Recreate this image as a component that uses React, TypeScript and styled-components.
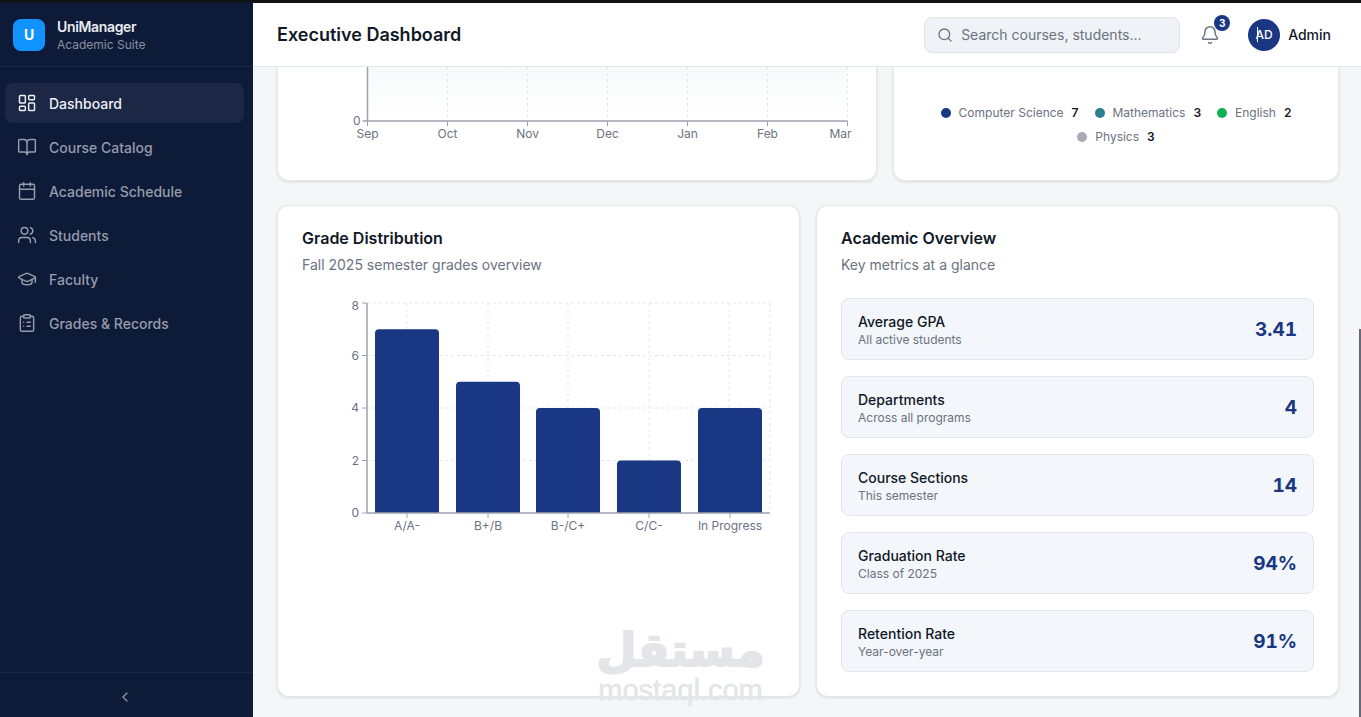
import React from "react";
import styled, { createGlobalStyle } from "styled-components";
import { LayoutDashboard, BookOpen, Calendar, Users, GraduationCap, ClipboardList, ChevronLeft, Search, Bell } from "lucide-react";

const Global = createGlobalStyle`
  html, body { margin: 0; padding: 0; height: 100%; overflow: hidden; }
  body { font-family: Inter, "Liberation Sans", sans-serif; background: #f5f6f8; }
  * { box-sizing: border-box; }
`;

const Shell = styled.div`
  position: relative;
  width: 1361px;
  height: 717px;
  overflow: hidden;
  display: flex;
  flex-direction: column;
`;
const TopEdge = styled.div`
  height: 3px;
  flex: none;
  background: #121316;
`;
const Frame = styled.div`
  flex: 1;
  min-height: 0;
  display: flex;
`;
const Sidebar = styled.aside`
  width: 253px;
  flex: none;
  background: #0d1a38;
  display: flex;
  flex-direction: column;
`;
const Brand = styled.div`
  height: 64px;
  flex: none;
  display: flex;
  align-items: center;
  gap: 12px;
  padding: 0 13px;
  border-bottom: 1px solid #1b2745;
`;
const LogoMark = styled.div`
  width: 32px;
  height: 32px;
  border-radius: 8px;
  background: #1093fe;
  color: #fff;
  font-size: 14px;
  font-weight: 700;
  display: flex;
  align-items: center;
  justify-content: center;
`;
const BrandText = styled.div`
  display: flex;
  flex-direction: column;
`;
const BrandName = styled.span`
  font-size: 14px;
  line-height: 20px;
  font-weight: 600;
  letter-spacing: -0.35px;
  color: #e9ebee;
`;
const BrandSub = styled.span`
  font-size: 12px;
  line-height: 16px;
  color: #8a90a0;
`;
const Nav = styled.nav`
  flex: 1;
  padding: 16px 9px 0 5px;
  display: flex;
  flex-direction: column;
  gap: 4px;
`;
const NavItem = styled.div<{ $active?: boolean }>`
  height: 40px;
  display: flex;
  align-items: center;
  gap: 12px;
  padding: 0 12px;
  border-radius: 8px;
  font-size: 14px;
  font-weight: 500;
  color: ${(p) => (p.$active ? "#eef0f3" : "#979cab")};
  background: ${(p) => (p.$active ? "#1b2745" : "transparent")};
`;
const SideFoot = styled.div`
  height: 45px;
  flex: none;
  border-top: 1px solid #1b2745;
  color: #8a90a0;
  padding: 4px 3px 0 0;
  display: flex;
  align-items: center;
  justify-content: center;
`;
const Main = styled.main`
  flex: 1;
  min-width: 0;
  display: flex;
  flex-direction: column;
`;
const Header = styled.header`
  height: 64px;
  flex: none;
  background: #fff;
  border-bottom: 1px solid #e1e6ec;
  display: flex;
  align-items: center;
  padding: 0 30px 0 24px;
`;
const PageTitle = styled.h1`
  margin: 0;
  flex: 1;
  font-size: 18px;
  font-weight: 600;
  color: #111827;
`;
const SearchBox = styled.div`
  width: 256px;
  height: 36px;
  display: flex;
  align-items: center;
  gap: 8px;
  padding: 0 12px;
  background: #eff2f6;
  border: 1px solid #e0e4ea;
  border-radius: 8px;
  color: #6b7280;
  font-size: 14px;
`;
const BellWrap = styled.div`
  position: relative;
  margin-left: 20px;
  width: 20px;
  height: 20px;
  color: #6b7280;
`;
const Badge = styled.span`
  position: absolute;
  top: -10px;
  left: 14px;
  width: 16px;
  height: 16px;
  border-radius: 50%;
  background: #1a3783;
  color: #fff;
  font-size: 10px;
  font-weight: 700;
  display: flex;
  align-items: center;
  justify-content: center;
`;
const Avatar = styled.div`
  position: relative;
  margin-left: 28px;
  width: 32px;
  height: 32px;
  border-radius: 50%;
  background: #1a3783;
  color: #fff;
  font-size: 12px;
  font-weight: 500;
  display: flex;
  align-items: center;
  justify-content: center;
  &::before {
    content: "";
    position: absolute;
    left: 9px;
    top: 8px;
    width: 1px;
    height: 15px;
    background: #fff;
  }
`;
const UserName = styled.span`
  margin-left: 8px;
  font-size: 14px;
  font-weight: 500;
  color: #111827;
`;
const Content = styled.div`
  flex: 1;
  min-height: 0;
  overflow: hidden;
  padding: 0 22px 0 24px;
  display: flex;
  flex-direction: column;
  gap: 24px;
`;
const TopRow = styled.div`
  display: grid;
  grid-template-columns: 600px 1fr;
  gap: 16px;
`;
const BottomRow = styled.div`
  display: grid;
  grid-template-columns: 1fr 1fr;
  gap: 16px;
  height: 492px;
`;
const Card = styled.section`
  background: #fff;
  border: 1px solid #e5e7eb;
  border-radius: 12px;
  box-shadow: 0 1px 3px rgba(17, 24, 39, 0.12);
  padding: 20px 24px 24px;
`;
const ClippedCard = styled(Card)`
  height: 114px;
  border-top: 0;
  border-top-left-radius: 0;
  border-top-right-radius: 0;
  padding: 0;
`;
const LegendCard = styled(ClippedCard)`
  padding: 38px 24px 0;
`;
const Legend = styled.div`
  display: flex;
  flex-wrap: wrap;
  justify-content: center;
  gap: 8px 16px;
`;
const LegendItem = styled.div`
  display: flex;
  align-items: center;
  gap: 8px;
  font-size: 12px;
  line-height: 16px;
  color: #6b7280;
`;
const Dot = styled.span<{ $color: string }>`
  width: 10px;
  height: 10px;
  border-radius: 50%;
  background: ${(p) => p.$color};
`;
const LegendValue = styled.b`
  font-weight: 600;
  color: #111827;
`;
const CardTitle = styled.h2`
  margin: 0;
  font-size: 16px;
  line-height: 24px;
  font-weight: 600;
  color: #111827;
`;
const CardSub = styled.p`
  margin: 5px 0 0;
  font-size: 14px;
  line-height: 20px;
  color: #6b7280;
`;
const ChartSvg = styled.svg`
  display: block;
`;
const BarChartSvg = styled(ChartSvg)`
  margin-top: 21px;
  overflow: visible;
`;
const AxisLabel = styled.text`
  font-family: Inter, "Liberation Sans", sans-serif;
  font-size: 12px;
  fill: #6b7280;
`;
const Stats = styled.div`
  margin-top: 23px;
  display: flex;
  flex-direction: column;
  gap: 16px;
`;
const StatRow = styled.div`
  height: 62px;
  display: flex;
  align-items: center;
  justify-content: space-between;
  padding: 0 16px;
  background: #f3f6fa;
  border: 1px solid #e2e6ec;
  border-radius: 8px;
`;
const StatText = styled.div`
  padding-top: 2px;
  display: flex;
  flex-direction: column;
`;
const StatLabel = styled.span`
  font-size: 14px;
  line-height: 20px;
  font-weight: 500;
  color: #111827;
`;
const StatSub = styled.span`
  font-size: 12px;
  line-height: 16px;
  color: #6b7280;
`;
const StatValue = styled.span`
  font-size: 19px;
  font-weight: 700;
  font-variant-numeric: tabular-nums;
  color: #1a3783;
`;
const Scrollbar = styled.div`
  position: absolute;
  right: 0;
  top: 329px;
  bottom: 0;
  width: 2px;
  background: #666a78;
`;
const Watermark = styled.div`
  position: absolute;
  left: 598px;
  top: 620px;
  width: 165px;
  display: flex;
  flex-direction: column;
  align-items: center;
  color: #e3e5e8;
  pointer-events: none;
`;
const WatermarkArabic = styled.span`
  font-family: "DejaVu Sans", sans-serif;
  font-size: 46px;
  line-height: 60px;
  font-weight: 700;
  white-space: nowrap;
  -webkit-text-stroke: 2px #e3e5e8;
`;
const WatermarkLatin = styled.span`
  margin-top: -4px;
  font-family: "Liberation Sans", sans-serif;
  font-size: 29px;
  line-height: 28px;
  white-space: nowrap;
  -webkit-text-stroke: 0.5px #e3e5e8;
`;

const navItems = [
  { label: "Dashboard", Icon: LayoutDashboard, active: true },
  { label: "Course Catalog", Icon: BookOpen },
  { label: "Academic Schedule", Icon: Calendar },
  { label: "Students", Icon: Users },
  { label: "Faculty", Icon: GraduationCap },
  { label: "Grades & Records", Icon: ClipboardList },
];
const legend = [
  { label: "Computer Science", value: 7, color: "#1a3783" },
  { label: "Mathematics", value: 3, color: "#2b7f8e" },
  { label: "English", value: 2, color: "#10b055" },
  { label: "Physics", value: 3, color: "#a9abb4" },
];
const stats = [
  { label: "Average GPA", sub: "All active students", value: "3.41" },
  { label: "Departments", sub: "Across all programs", value: "4" },
  { label: "Course Sections", sub: "This semester", value: "14" },
  { label: "Graduation Rate", sub: "Class of 2025", value: "94%" },
  { label: "Retention Rate", sub: "Year-over-year", value: "91%" },
];
const months = ["Sep", "Oct", "Nov", "Dec", "Jan", "Feb", "Mar"];
const bars = [
  { label: "A/A-", x: 73, value: 7 },
  { label: "B+/B", x: 154, value: 5 },
  { label: "B-/C+", x: 234, value: 4 },
  { label: "C/C-", x: 315, value: 2 },
  { label: "In Progress", x: 396, value: 4 },
];

const axis = "#9fa2ac";
const grid = "#e5e7eb";

function TrendChart() {
  const x0 = 89.5;
  const last = months.length - 1;
  return (
    <ChartSvg width={580} height={90}>
      <defs>
        <linearGradient id="trendFill" x1="0" y1="0" x2="0" y2="1">
          <stop offset="0" stopColor="#f8f9fa" />
          <stop offset="1" stopColor="#ffffff" />
        </linearGradient>
      </defs>
      <rect x={x0} y={0} width={480} height={48} fill="url(#trendFill)" />
      {months.map((m, i) => {
        const x = x0 + i * 80;
        return (
          <g key={m}>
            {i > 0 && <line x1={x} x2={x} y1={0} y2={54} stroke={grid} strokeDasharray="3 3" />}
            <line x1={x} x2={x} y1={54} y2={59} stroke={axis} />
            <AxisLabel x={i === last ? x + 4 : x} y={71} textAnchor={i === last ? "end" : "middle"}>{m}</AxisLabel>
          </g>
        );
      })}
      <line x1={x0} x2={x0} y1={0} y2={54} stroke={axis} strokeWidth={1.5} />
      <line x1={x0 - 5} x2={x0 + 480} y1={54} y2={54} stroke={axis} strokeWidth={1.5} />
      <AxisLabel x={x0 - 7} y={58} textAnchor="end">0</AxisLabel>
    </ChartSvg>
  );
}

function GradeChart() {
  const base = 217;
  const unit = 26.25;
  const left = 65;
  const right = 468;
  return (
    <BarChartSvg width={473} height={240}>
      {[2, 4, 6, 8].map((v) => (
        <line key={v} x1={left} x2={right} y1={base - v * unit} y2={base - v * unit} stroke={grid} strokeDasharray="3 3" />
      ))}
      {[105, 186, 266, 347, 427, 468].map((x) => (
        <line key={x} x1={x} x2={x} y1={base - 8 * unit} y2={base} stroke={grid} strokeDasharray="3 3" />
      ))}
      {bars.map((b) => (
        <path
          key={b.label}
          fill="#1a3783"
          d={`M${b.x} ${base}V${base - b.value * unit + 4}Q${b.x} ${base - b.value * unit} ${b.x + 4} ${base - b.value * unit}H${b.x + 60}Q${b.x + 64} ${base - b.value * unit} ${b.x + 64} ${base - b.value * unit + 4}V${base}Z`}
        />
      ))}
      {[0, 2, 4, 6, 8].map((v) => (
        <g key={v}>
          <line x1={60} x2={65} y1={base - v * unit} y2={base - v * unit} stroke={axis} />
          <AxisLabel x={57} y={base - v * unit + (v === 8 ? 7 : 4)} textAnchor="end">{v}</AxisLabel>
        </g>
      ))}
      {bars.map((b) => (
        <g key={b.label}>
          <line x1={b.x + 32} x2={b.x + 32} y1={base} y2={base + 5} stroke={axis} />
          <AxisLabel x={b.x + 32} y={base + 17} textAnchor="middle">{b.label}</AxisLabel>
        </g>
      ))}
      <line x1={65} x2={65} y1={base - 8 * unit} y2={base} stroke={axis} strokeWidth={1.5} />
      <line x1={65} x2={right} y1={base} y2={base} stroke={axis} strokeWidth={1.5} />
    </BarChartSvg>
  );
}

export default function App() {
  return (
    <Shell>
      <Global />
      <TopEdge />
      <Frame>
        <Sidebar>
          <Brand>
            <LogoMark>U</LogoMark>
            <BrandText>
              <BrandName>UniManager</BrandName>
              <BrandSub>Academic Suite</BrandSub>
            </BrandText>
          </Brand>
          <Nav>
            {navItems.map(({ label, Icon, active }) => (
              <NavItem key={label} $active={active}>
                <Icon size={20} strokeWidth={1.75} />
                {label}
              </NavItem>
            ))}
          </Nav>
          <SideFoot>
            <ChevronLeft size={16} />
          </SideFoot>
        </Sidebar>
        <Main>
          <Header>
            <PageTitle>Executive Dashboard</PageTitle>
            <SearchBox>
              <Search size={16} />
              Search courses, students...
            </SearchBox>
            <BellWrap>
              <Bell size={20} strokeWidth={1.75} />
              <Badge>3</Badge>
            </BellWrap>
            <Avatar>AD</Avatar>
            <UserName>Admin</UserName>
          </Header>
          <Content>
            <TopRow>
              <ClippedCard>
                <TrendChart />
              </ClippedCard>
              <LegendCard>
                <Legend>
                  {legend.map((l) => (
                    <LegendItem key={l.label}>
                      <Dot $color={l.color} />
                      {l.label}
                      <LegendValue>{l.value}</LegendValue>
                    </LegendItem>
                  ))}
                </Legend>
              </LegendCard>
            </TopRow>
            <BottomRow>
              <Card>
                <CardTitle>Grade Distribution</CardTitle>
                <CardSub>Fall 2025 semester grades overview</CardSub>
                <GradeChart />
              </Card>
              <Card>
                <CardTitle>Academic Overview</CardTitle>
                <CardSub>Key metrics at a glance</CardSub>
                <Stats>
                  {stats.map((s) => (
                    <StatRow key={s.label}>
                      <StatText>
                        <StatLabel>{s.label}</StatLabel>
                        <StatSub>{s.sub}</StatSub>
                      </StatText>
                      <StatValue>{s.value}</StatValue>
                    </StatRow>
                  ))}
                </Stats>
              </Card>
            </BottomRow>
          </Content>
        </Main>
      </Frame>
      <Scrollbar />
      <Watermark>
        <WatermarkArabic>مستقل</WatermarkArabic>
        <WatermarkLatin>mostaql.com</WatermarkLatin>
      </Watermark>
    </Shell>
  );
}
